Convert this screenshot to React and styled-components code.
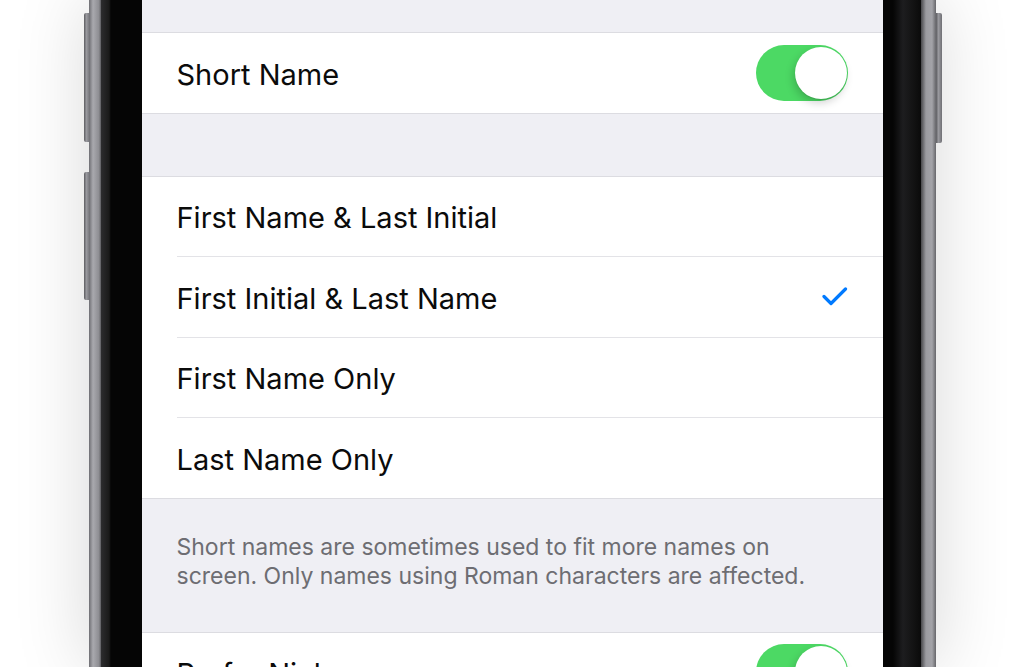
import React from 'react';
import styled, { createGlobalStyle } from 'styled-components';

const Global = createGlobalStyle`
  html, body {
    margin: 0;
    padding: 0;
    height: 100%;
    overflow: hidden;
    background: #ffffff;
  }
  body {
    font-family: Inter, "Noto Sans", "Liberation Sans", sans-serif;
    -webkit-font-smoothing: antialiased;
  }
`;

const Stage = styled.div`
  height: 667px;
  display: flex;
  justify-content: center;
  overflow: hidden;
`;

const Frame = styled.div`
  position: relative;
  width: 847px;
  height: 100%;
  box-sizing: border-box;
  padding: 0 15px 0 12px;
  background: linear-gradient(90deg, #6e6e73 0, #a9a9ae 4px, #8d8d92 10px, #5a5a5e 12px, #3a3a3c 13px, transparent 13px, transparent calc(100% - 15px), #48484b calc(100% - 15px), #9c9ca1 calc(100% - 10px), #a3a3a8 calc(100% - 4px), #66666a 100%);
  box-shadow: 0 0 70px rgba(0, 0, 0, 0.16);
`;

const SideButton = styled.div`
  position: absolute;
  width: 6px;
  top: ${(p) => p.top}px;
  height: ${(p) => p.h}px;
  ${(p) => (p.right ? 'right: -6px;' : 'left: -5px;')}
  border-radius: ${(p) => (p.right ? '0 2px 2px 0' : '2px 0 0 2px')};
  background: linear-gradient(90deg, #5b5b5f, #9a9a9f 40%, #6f6f74);
`;

const Bezel = styled.div`
  height: 100%;
  box-sizing: border-box;
  padding: 0 38px 0 41px;
  background: linear-gradient(90deg, #2c2c2e 0, #1a1a1a 8px, #050505 10px, #050505 calc(100% - 28px), #1d1d1f calc(100% - 18px), #111 calc(100% - 6px), #0a0a0a 100%);
`;

const Screen = styled.div`
  height: 100%;
  background: #efeff4;
  display: flex;
  flex-direction: column;
`;

const Gap = styled.div`
  height: ${(p) => p.h}px;
  flex-shrink: 0;
`;

const Group = styled.div`
  background: #ffffff;
  border-top: 1px solid #dcdce1;
  border-bottom: 1px solid #dcdce1;
  flex-shrink: 0;
`;

const Row = styled.div`
  height: 79.5px;
  display: flex;
  align-items: center;
  justify-content: space-between;
  margin-left: 35px;
  padding-right: 35px;
  border-bottom: ${(p) => (p.last ? 'none' : '1px solid #e3e3e7')};
`;

const Label = styled.span`
  font-size: 29px;
  color: #0b0b0b;
  padding-top: 3px;
`;

const Track = styled.div`
  position: relative;
  width: 92px;
  height: 56px;
  border-radius: 28px;
  background: ${(p) => (p.on ? '#4cd964' : '#e5e5ea')};
`;

const Knob = styled.div`
  position: absolute;
  top: 2px;
  ${(p) => (p.on ? 'right: 1px;' : 'left: 2px;')}
  width: 52px;
  height: 52px;
  border-radius: 50%;
  background: #ffffff;
  box-shadow: -2px 4px 8px rgba(0, 0, 0, 0.18), 0 1px 1px rgba(0, 0, 0, 0.1);
`;

const Footer = styled.div`
  padding: 34px 55px 41px 35px;
  font-size: 23px;
  line-height: 29px;
  color: #6d6d72;
  flex-shrink: 0;
`;

const Toggle = ({ on }) => (
  <Track on={on ? 1 : 0}>
    <Knob on={on ? 1 : 0} />
  </Track>
);

const Check = () => (
  <svg width="26" height="22" viewBox="0 0 26 22">
    <path d="M2 10.5 L9 17.5 L23.5 3" fill="none" stroke="#007aff" strokeWidth="3.2" strokeLinecap="round" strokeLinejoin="round" />
  </svg>
);

const options = [
  'First Name & Last Initial',
  'First Initial & Last Name',
  'First Name Only',
  'Last Name Only',
];

export default function App() {
  return (
    <>
      <Global />
      <Stage>
        <Frame>
          <SideButton top={13} h={129} />
          <SideButton top={172} h={128} />
          <SideButton right top={13} h={130} />
          <Bezel>
            <Screen>
              <Gap h={32} />
              <Group>
                <Row last>
                  <Label>Short Name</Label>
                  <Toggle on />
                </Row>
              </Group>
              <Gap h={62} />
              <Group>
                {options.map((o, i) => (
                  <Row key={o} last={i === options.length - 1}>
                    <Label>{o}</Label>
                    {i === 1 && <Check />}
                  </Row>
                ))}
              </Group>
              <Footer>
                Short names are sometimes used to fit more names on screen. Only names using Roman characters are affected.
              </Footer>
              <Group>
                <Row last>
                  <Label>Prefer Nicknames</Label>
                  <Toggle on />
                </Row>
              </Group>
            </Screen>
          </Bezel>
        </Frame>
      </Stage>
    </>
  );
}
